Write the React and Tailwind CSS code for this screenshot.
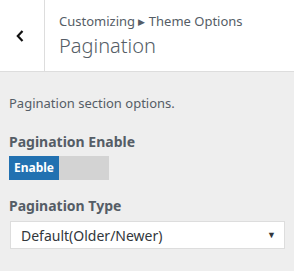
export default function App() {
  return (
    <div
      className="w-[294px] h-[271px] bg-[#eeeeee] overflow-hidden text-[#555d66]"
      style={{ fontFamily: '"Noto Sans", "Open Sans", sans-serif' }}
    >
      <header className="flex h-[72px] bg-white border-b border-[#dddddd]">
        <button className="w-[45px] h-full flex items-center pl-[16px] border-r border-[#dddddd] text-[#111111]">
          <svg width="8" height="12" viewBox="0 0 8 12" fill="none">
            <path d="M6.5 1 L1.8 6 L6.5 11" stroke="currentColor" strokeWidth="2.2" />
          </svg>
        </button>
        <div className="pl-[14px] pt-[12px]">
          <p className="text-[13px] leading-[18px] text-[#555d66]">
            Customizing <span className="text-[9px] align-[1px]">▶</span> Theme Options
          </p>
          <h1 className="text-[20px] leading-[28px] font-light text-[#555d66] mt-[1px]">Pagination</h1>
        </div>
      </header>

      <div className="px-[9px] pt-[22px]">
        <p className="text-[13px] leading-[18px] text-[#555d66]">Pagination section options.</p>

        <h2 className="mt-[20px] text-[14px] leading-[20px] font-bold text-[#555d66]">Pagination Enable</h2>
        <div className="mt-[4px] flex h-[24px] w-[100px]">
          <span className="w-[50px] bg-[#2271b1] text-white text-[12px] font-bold flex items-center justify-center">
            Enable
          </span>
          <span className="w-[50px] bg-[#d3d3d3]"></span>
        </div>

        <h2 className="mt-[16px] text-[14px] leading-[20px] font-bold text-[#555d66]">Pagination Type</h2>
        <div className="mt-[5px] ml-[1px] w-[275px] h-[28px] bg-white border border-[#dddddd] flex items-center justify-between pl-[10px] pr-[8px]">
          <span className="text-[14px] text-[#32373c]">Default(Older/Newer)</span>
          <span className="text-[9px] text-[#32373c]">▼</span>
        </div>
      </div>
    </div>
  );
}
